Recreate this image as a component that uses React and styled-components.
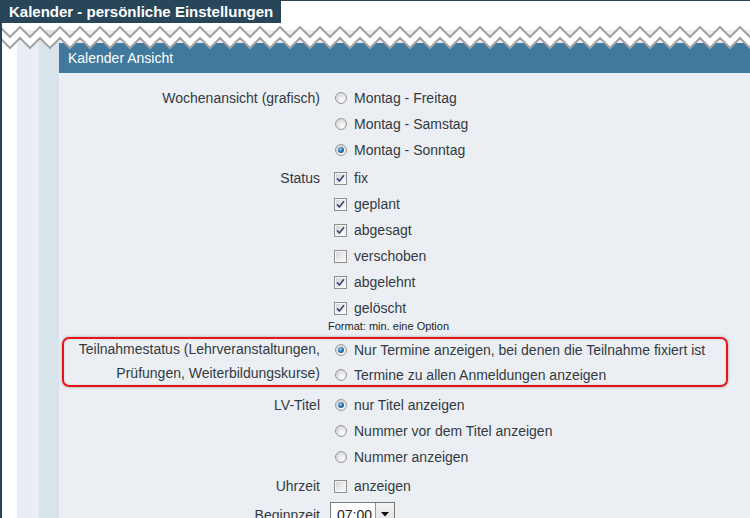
import React from "react";
import styled, { createGlobalStyle } from "styled-components";

const GlobalStyle = createGlobalStyle`
  html, body { margin: 0; padding: 0; background: #ffffff; }
  body { font-family: "Liberation Sans", Arial, sans-serif; font-size: 14px; color: #333a42; }
  * { box-sizing: border-box; }
`;

const Page = styled.div`
  min-height: 518px;
  border-left: 2px solid #2b4356;
  border-top: 1px solid #2b4356;
  overflow: hidden;
`;

const Header = styled.div`
  height: 29px;
`;

const TitleBar = styled.div`
  display: inline-block;
  height: 22px;
  line-height: 22px;
  padding: 0 8px 0 7px;
  background: #284659;
  color: #ffffff;
  font-weight: bold;
  font-size: 15px;
`;

const Main = styled.div`
  position: relative;
  display: flex;
  min-height: 488px;
`;

const Strip = styled.div`
  flex: 0 0 ${(p) => p.$w}px;
  background: ${(p) => p.$bg};
`;

const Content = styled.div`
  flex: 1;
  background: #ebeff3;
  padding-top: 13px;
`;

const SectionHeader = styled.div`
  height: 30px;
  line-height: 31px;
  padding-left: 9px;
  background: #41789d;
  color: #ffffff;
  font-size: 14px;
`;

const Form = styled.div`
  display: flex;
  flex-direction: column;
  padding-top: 12px;
`;

const Row = styled.div`
  position: relative;
  display: flex;
  align-items: flex-start;
  margin-top: ${(p) => p.$gap || 0}px;
  ${(p) =>
    p.$highlight &&
    `
    &::after {
      content: "";
      position: absolute;
      top: 0;
      bottom: 0;
      left: 3px;
      right: 22px;
      border: 2px solid #e8141c;
      border-radius: 7px;
      box-shadow: 0 0 3px rgba(0,0,0,0.35), inset 0 0 2px rgba(0,0,0,0.15);
      pointer-events: none;
    }
  `}
`;

const Label = styled.div`
  flex: 0 0 271px;
  padding-right: 10px;
  text-align: right;
  line-height: ${(p) => p.$lh || 26}px;
  padding-top: ${(p) => p.$pt || 0}px;
`;

const Options = styled.div`
  display: flex;
  flex-direction: column;
`;

const Option = styled.div`
  display: flex;
  align-items: center;
  height: ${(p) => p.$h || 26}px;
  white-space: nowrap;
`;

const OptionText = styled.span`
  margin-left: 4px;
`;

const RadioCircle = styled.span`
  position: relative;
  display: inline-block;
  width: 12px;
  height: 12px;
  margin: 0 3px 0 5px;
  border-radius: 50%;
  border: 1px solid #9a9b9c;
  background: radial-gradient(circle at 62% 68%, #ffffff 0%, #ececec 35%, #c9c9c9 100%);
  &::after {
    content: "";
    display: ${(p) => (p.$checked ? "block" : "none")};
    position: absolute;
    left: 2px;
    top: 2px;
    width: 6px;
    height: 6px;
    border-radius: 50%;
    background: radial-gradient(circle at 40% 35%, #9fd2f5 0%, #2a78b6 45%, #123e66 100%);
  }
`;

const CheckBox = styled.span`
  display: inline-flex;
  align-items: center;
  justify-content: center;
  width: 13px;
  height: 13px;
  margin: 0 3px 0 4px;
  border: 1px solid #8e8f8f;
  background: linear-gradient(135deg, #cfcfcf 0%, #ececec 55%, #ffffff 100%);
  box-shadow: inset 0 0 0 1px #f6f6f6;
`;

const Note = styled.div`
  font-size: 11px;
  line-height: 12px;
  color: #1f1f1f;
  margin: -1px 0 0 -2px;
`;

const SelectBox = styled.div`
  display: flex;
  height: 24px;
  margin-top: 2px;
  border: 1px solid #7a7a7a;
  background: #ffffff;
`;

const SelectValue = styled.span`
  width: 44px;
  padding-left: 6px;
  line-height: 24px;
  color: #222;
`;

const SelectButton = styled.span`
  width: 19px;
  display: flex;
  align-items: center;
  justify-content: center;
  border-left: 1px solid #9a9a9a;
  background: linear-gradient(#f4f4f4, #dedede);
`;

const ZigzagLayer = styled.svg`
  position: absolute;
  top: -4px;
  left: -2px;
  width: 760px;
  height: 24px;
  pointer-events: none;
`;

function Radio({ checked, children, h }) {
  return (
    <Option $h={h}>
      <RadioCircle $checked={checked} />
      <OptionText>{children}</OptionText>
    </Option>
  );
}

function Check({ checked, children }) {
  return (
    <Option>
      <CheckBox>
        {checked && (
          <svg width="9" height="9" viewBox="0 0 9 9">
            <path d="M1 4.4 L3.4 7 L8 1.2" fill="none" stroke="#3a4c78" strokeWidth="1.7" />
          </svg>
        )}
      </CheckBox>
      <OptionText>{children}</OptionText>
    </Option>
  );
}

function Zigzag() {
  const top = [];
  const bottom = [];
  for (let x = -10, i = 0; x <= 780; x += 10, i++) {
    const up = i % 2 === 1;
    top.push(`${x},${up ? 1 : 11}`);
    bottom.push(`${x},${up ? 12 : 22}`);
  }
  const ribbon = [...top, ...bottom.slice().reverse()].join(" ");
  return (
    <ZigzagLayer viewBox="0 0 760 24">
      <polygon points={ribbon} fill="#ffffff" />
      <polyline points={top.join(" ")} fill="none" stroke="#a3a3a3" strokeWidth="2" />
      <polyline points={bottom.join(" ")} fill="none" stroke="#a3a3a3" strokeWidth="2" />
    </ZigzagLayer>
  );
}

export default function App() {
  return (
    <>
      <GlobalStyle />
      <Page>
        <Header>
          <TitleBar>Kalender - persönliche Einstellungen</TitleBar>
        </Header>
        <Main>
          <Strip $w={15} $bg="#ffffff" />
          <Strip $w={22} $bg="#e8eef3" />
          <Strip $w={20} $bg="#d9e3eb" />
          <Content>
            <SectionHeader>Kalender Ansicht</SectionHeader>
            <Form>
              <Row>
                <Label>Wochenansicht (grafisch)</Label>
                <Options>
                  <Radio>Montag - Freitag</Radio>
                  <Radio>Montag - Samstag</Radio>
                  <Radio checked>Montag - Sonntag</Radio>
                </Options>
              </Row>
              <Row $gap={2}>
                <Label>Status</Label>
                <Options>
                  <Check checked>fix</Check>
                  <Check checked>geplant</Check>
                  <Check checked>abgesagt</Check>
                  <Check>verschoben</Check>
                  <Check checked>abgelehnt</Check>
                  <Check checked>gelöscht</Check>
                  <Note>Format: min. eine Option</Note>
                </Options>
              </Row>
              <Row $gap={5} $highlight>
                <Label $lh={24} $pt={0}>
                  Teilnahmestatus (Lehrveranstaltungen, Prüfungen, Weiterbildungskurse)
                </Label>
                <Options>
                  <Radio checked h={25}>Nur Termine anzeigen, bei denen die Teilnahme fixiert ist</Radio>
                  <Radio h={25}>Termine zu allen Anmeldungen anzeigen</Radio>
                </Options>
              </Row>
              <Row $gap={5}>
                <Label>LV-Titel</Label>
                <Options>
                  <Radio checked>nur Titel anzeigen</Radio>
                  <Radio>Nummer vor dem Titel anzeigen</Radio>
                  <Radio>Nummer anzeigen</Radio>
                </Options>
              </Row>
              <Row $gap={3}>
                <Label>Uhrzeit</Label>
                <Options>
                  <Check>anzeigen</Check>
                </Options>
              </Row>
              <Row $gap={1}>
                <Label $pt={2}>Beginnzeit</Label>
                <SelectBox>
                  <SelectValue>07:00</SelectValue>
                  <SelectButton>
                    <svg width="8" height="5" viewBox="0 0 8 5">
                      <path d="M0 0 L8 0 L4 4.5 Z" fill="#111" />
                    </svg>
                  </SelectButton>
                </SelectBox>
              </Row>
            </Form>
          </Content>
          <Zigzag />
        </Main>
      </Page>
    </>
  );
}
